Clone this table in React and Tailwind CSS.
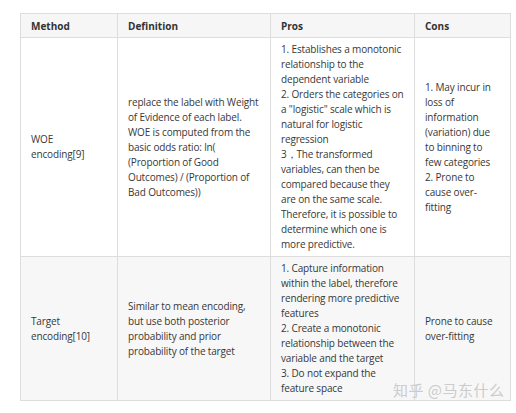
import React from 'react';

// lines kept as in the source so wrapping matches
const rows = [
    {
        method: ['WOE', 'encoding[9]'],
        definition: [
            'replace the label with Weight',
            'of Evidence of each label.',
            'WOE is computed from the',
            'basic odds ratio: ln(',
            '(Proportion of Good',
            'Outcomes) / (Proportion of',
            'Bad Outcomes))',
        ],
        pros: [
            '1. Establishes a monotonic',
            'relationship to the',
            'dependent variable',
            '2. Orders the categories on',
            'a "logistic" scale which is',
            'natural for logistic',
            'regression',
            '3，The transformed',
            'variables, can then be',
            'compared because they',
            'are on the same scale.',
            'Therefore, it is possible to',
            'determine which one is',
            'more predictive.',
        ],
        cons: [
            '1. May incur in',
            'loss of',
            'information',
            '(variation) due',
            'to binning to',
            'few categories',
            '2. Prone to',
            'cause over-',
            'fitting',
        ],
        bg: 'bg-white',
    },
    {
        method: ['Target', 'encoding[10]'],
        definition: [
            'Similar to mean encoding,',
            'but use both posterior',
            'probability and prior',
            'probability of the target',
        ],
        pros: [
            '1. Capture information',
            'within the label, therefore',
            'rendering more predictive',
            'features',
            '2. Create a monotonic',
            'relationship between the',
            'variable and the target',
            '3. Do not expand the',
            'feature space',
        ],
        cons: ['Prone to cause', 'over-fitting'],
        bg: 'bg-[#f7f7f7]',
    },
];

const cell = 'border border-[#dddddd] px-[10px] align-middle';

const Lines = ({ lines }) => (
    <>
        {lines.map((l, j) => (
            <div key={j} className="whitespace-nowrap">
                {l}
            </div>
        ))}
    </>
);

const App = () => {
    return (
        <div className="relative w-[516px] h-[413px] bg-white overflow-hidden pt-[13px] pl-[20px] font-['Open_Sans',sans-serif] text-[#383838]">
            <table className="table-fixed border-collapse w-[490px] text-[10px] leading-[15px] tracking-[-0.15px]">
                <colgroup>
                    <col className="w-[97px]" />
                    <col className="w-[153px]" />
                    <col className="w-[144px]" />
                    <col className="w-[96px]" />
                </colgroup>
                <thead>
                    <tr className="bg-[#f6f6f6]">
                        {['Method', 'Definition', 'Pros', 'Cons'].map((h) => (
                            <th key={h} className={`${cell} h-[24px] py-0 leading-[14px] text-left font-bold text-[#333] tracking-normal`}>
                                {h}
                            </th>
                        ))}
                    </tr>
                </thead>
                <tbody>
                    {rows.map((row, i) => (
                        <tr key={i} className={row.bg}>
                            <td className={`${cell} py-[4px]`}>
                                <Lines lines={row.method} />
                            </td>
                            <td className={`${cell} py-[4px]`}>
                                <Lines lines={row.definition} />
                            </td>
                            <td className={`${cell} py-[4px]`}>
                                <Lines lines={row.pros} />
                            </td>
                            <td className={`${cell} py-[4px]`}>
                                <Lines lines={row.cons} />
                            </td>
                        </tr>
                    ))}
                </tbody>
            </table>

            {/* watermark */}
            <div className="absolute left-[393px] top-[380px] text-[15px] leading-[20px] tracking-[0.5px] text-[#cccccc] font-['Noto_Sans_CJK_SC',sans-serif] whitespace-nowrap">
                知乎 @马东什么
            </div>
        </div>
    );
};

export default App;
